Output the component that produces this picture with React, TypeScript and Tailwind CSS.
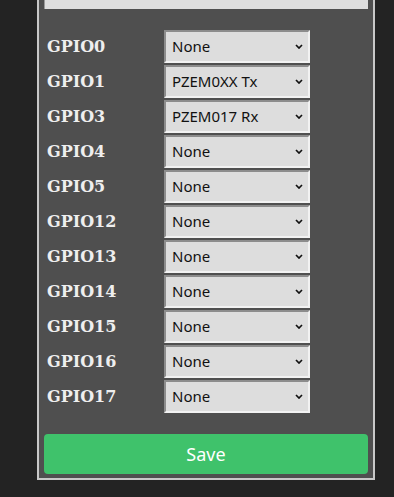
import React from "react";

const rows: [string, string][] = [
  ["GPIO0", "None"],
  ["GPIO1", "PZEM0XX Tx"],
  ["GPIO3", "PZEM017 Rx"],
  ["GPIO4", "None"],
  ["GPIO5", "None"],
  ["GPIO12", "None"],
  ["GPIO13", "None"],
  ["GPIO14", "None"],
  ["GPIO15", "None"],
  ["GPIO16", "None"],
  ["GPIO17", "None"],
];

function Chevron() {
  return (
    <svg width="8" height="5" viewBox="0 0 8 5" className="shrink-0">
      <path d="M1 1 L4 4 L7 1" fill="none" stroke="#111" strokeWidth="1.7" />
    </svg>
  );
}

export default function App() {
  return (
    <div className="w-full h-[497px] bg-[#232323] overflow-hidden">
      <div className="ml-[37px] w-[338px] -mt-[29px] border-2 border-[#c8c8c8] bg-[#4f4f4f] px-[5px] pt-[2px] pb-[4px]">
        <div className="h-[34px] bg-[#dedede] border-l border-t border-[#9a9a9a] flex items-start justify-center">
          <span
            className="pl-[50px] text-[16px] leading-[32px] text-[#111]"
            style={{ fontFamily: '"Liberation Sans", Arial, sans-serif' }}
          >
            (1)
          </span>
        </div>
        <div className="mt-[21px] flex flex-col gap-[2px]">
          {rows.map(([label, value]) => (
            <div key={label} className="flex items-center h-[33px]">
              <div
                className="w-[120px] pl-[3px] text-[16px] font-bold text-[#eeeeee]"
                style={{ fontFamily: '"DejaVu Serif", serif' }}
              >
                {label}
              </div>
              <div className="w-[146px] h-[33px] bg-[#dddddd] border-2 border-t-[#8c8c8c] border-l-[#8c8c8c] border-r-[#f2f2f2] border-b-[#f2f2f2] flex items-center justify-between pl-[6px] pr-[5px]">
                <span
                  className="text-[15px] text-[#111] leading-none"
                  style={{ fontFamily: '"Noto Sans", sans-serif' }}
                >
                  {value}
                </span>
                <Chevron />
              </div>
            </div>
          ))}
        </div>
        <button
          className="mt-[21px] w-full h-[40px] rounded-[4px] bg-[#3fc26b] text-white text-[18px] flex items-center justify-center"
          style={{ fontFamily: '"Noto Sans", sans-serif' }}
        >
          Save
        </button>
      </div>
    </div>
  );
}
